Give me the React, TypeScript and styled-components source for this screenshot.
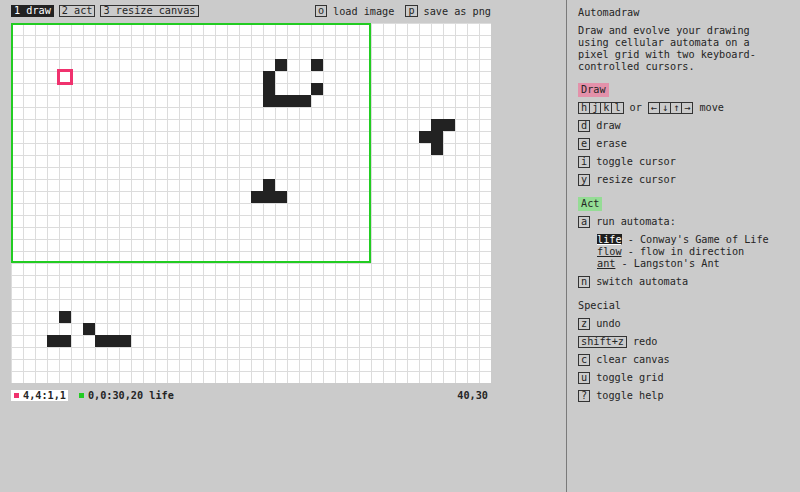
import React from 'react';
import styled, { createGlobalStyle } from 'styled-components';

const COLS = 40;
const ROWS = 30;
const CELL = 12;

// live pixels on the canvas, [col, row]
const pixels: [number, number][] = [
  [22, 3], [25, 3], [21, 4], [21, 5], [25, 5], [21, 6], [22, 6], [23, 6], [24, 6],
  [35, 8], [36, 8], [34, 9], [35, 9], [35, 10],
  [21, 13], [20, 14], [21, 14], [22, 14],
  [4, 24], [6, 25], [3, 26], [4, 26], [7, 26], [8, 26], [9, 26],
];

const PINK = '#f0326e';
const GREEN = '#22cc22';

const GlobalStyle = createGlobalStyle`
  html, body {
    margin: 0;
    padding: 0;
    background: #cbcbcb;
  }
  body {
    font-family: "DejaVu Sans Mono", "Liberation Mono", monospace;
    font-size: 10.2px;
    color: #252525;
  }
`;

const Layout = styled.div`
  display: flex;
  height: 100vh;
  overflow: hidden;
`;

const Main = styled.div`
  width: 566px;
  flex-shrink: 0;
  padding: 5px 11px 0 11px;
  box-sizing: border-box;
  display: flex;
  flex-direction: column;
  gap: 6px;
`;

const Toolbar = styled.div`
  width: 480px;
  display: flex;
  justify-content: space-between;
  align-items: center;
`;

const Group = styled.div`
  display: flex;
  align-items: center;
  gap: 5px;
`;

const Tab = styled.span<{ $active?: boolean }>`
  display: inline-block;
  line-height: 10px;
  padding: 0 2px;
  border: 1px solid ${(p) => (p.$active ? '#222' : '#333')};
  background: ${(p) => (p.$active ? '#222' : 'transparent')};
  color: ${(p) => (p.$active ? '#fff' : '#252525')};
  white-space: pre;
`;

const Action = styled.span`
  display: flex;
  align-items: center;
  gap: 6px;
  margin-left: 6px;
`;

const Key = styled.span`
  display: inline-block;
  line-height: 10px;
  padding: 0 2px;
  border: 1px solid #333;
  white-space: pre;
`;

const KeyGroup = styled.span`
  display: inline-flex;
  border: 1px solid #333;
  & > span {
    line-height: 10px;
    padding: 0 2px;
    border-left: 1px solid #333;
  }
  & > span:first-child {
    border-left: none;
  }
`;

const Canvas = styled.svg`
  display: block;
`;

const Status = styled.div`
  width: 480px;
  display: flex;
  align-items: center;
  margin-top: 1px;
  font-weight: bold;
  line-height: 11px;
`;

const Cursor = styled.span<{ $active?: boolean }>`
  display: flex;
  align-items: center;
  gap: 4px;
  padding: 0 2px 0 3px;
  margin-right: 8px;
  background: ${(p) => (p.$active ? '#fff' : 'transparent')};
`;

const Swatch = styled.span<{ $color: string }>`
  width: 5px;
  height: 5px;
  background: ${(p) => p.$color};
`;

const Size = styled.span`
  margin-left: auto;
  padding-right: 3px;
`;

const Panel = styled.div`
  flex: 1;
  border-left: 1px solid #7a7a7a;
  padding: 7px 11px 0 11px;
  line-height: 12px;
`;

const Title = styled.div`
  margin-bottom: 6px;
`;

const Desc = styled.div`
  max-width: 32ch;
  margin-bottom: -1px;
`;

const Section = styled.div`
  margin-top: 11px;
`;

const Label = styled.span<{ $tone?: 'draw' | 'act' }>`
  display: inline-block;
  line-height: 10px;
  padding: 2px ${(p) => (p.$tone ? '3px' : '0')};
  background: ${(p) =>
    p.$tone === 'draw' ? '#e391aa' : p.$tone === 'act' ? '#95dc95' : 'transparent'};
`;

const List = styled.div`
  display: flex;
  flex-direction: column;
  gap: 6px;
  margin-top: 5px;
`;

const Row = styled.div`
  display: flex;
  align-items: center;
  gap: 6px;
  height: 12px;
  white-space: pre;
`;

const SubList = styled.div`
  margin-left: 19px;
  white-space: pre;
`;

const Mode = styled.span<{ $active?: boolean }>`
  text-decoration: underline;
  background: ${(p) => (p.$active ? '#1e1e1e' : 'transparent')};
  color: ${(p) => (p.$active ? '#fff' : 'inherit')};
`;

function PixelCanvas() {
  const lines: React.ReactNode[] = [];
  for (let c = 0; c < COLS; c++) {
    lines.push(<line key={'v' + c} x1={c * CELL + 0.5} y1={0} x2={c * CELL + 0.5} y2={ROWS * CELL} />);
  }
  for (let r = 0; r < ROWS; r++) {
    lines.push(<line key={'h' + r} x1={0} y1={r * CELL + 0.5} x2={COLS * CELL} y2={r * CELL + 0.5} />);
  }
  return (
    <Canvas width={COLS * CELL} height={ROWS * CELL}>
      <rect width={COLS * CELL} height={ROWS * CELL} fill="#fff" />
      <g stroke="#dcdcdc" strokeWidth={1}>{lines}</g>
      <g fill="#222">
        {pixels.map(([c, r]) => (
          <rect key={c + '-' + r} x={c * CELL} y={r * CELL} width={CELL} height={CELL} />
        ))}
      </g>
      <rect x={1} y={1} width={30 * CELL - 2} height={20 * CELL - 2} fill="none" stroke={GREEN} strokeWidth={2} />
      <rect x={4 * CELL - 0.5} y={4 * CELL - 0.5} width={CELL + 1} height={CELL + 1} fill="none" stroke={PINK} strokeWidth={3} />
    </Canvas>
  );
}

const App: React.FC = () => {
  return (
    <>
      <GlobalStyle />
      <Layout>
        <Main>
          <Toolbar>
            <Group>
              <Tab $active>1 draw</Tab>
              <Tab>2 act</Tab>
              <Tab>3 resize canvas</Tab>
            </Group>
            <Group>
              <Action><Key>o</Key>load image</Action>
              <Action><Key>p</Key>save as png</Action>
            </Group>
          </Toolbar>
          <PixelCanvas />
          <Status>
            <Cursor $active><Swatch $color={PINK} />4,4:1,1</Cursor>
            <Cursor><Swatch $color={GREEN} />0,0:30,20 life</Cursor>
            <Size>40,30</Size>
          </Status>
        </Main>
        <Panel>
          <Title>Automadraw</Title>
          <Desc>
            Draw and evolve your drawing using cellular automata on a pixel grid with two keyboard-controlled cursors.
          </Desc>
          <Section>
            <Label $tone="draw">Draw</Label>
            <List>
              <Row>
                <KeyGroup><span>h</span><span>j</span><span>k</span><span>l</span></KeyGroup>
                or
                <KeyGroup><span>←</span><span>↓</span><span>↑</span><span>→</span></KeyGroup>
                move
              </Row>
              <Row><Key>d</Key>draw</Row>
              <Row><Key>e</Key>erase</Row>
              <Row><Key>i</Key>toggle cursor</Row>
              <Row><Key>y</Key>resize cursor</Row>
            </List>
          </Section>
          <Section>
            <Label $tone="act">Act</Label>
            <List>
              <Row><Key>a</Key>run automata:</Row>
              <SubList>
                <div><Mode $active>life</Mode> - Conway's Game of Life</div>
                <div><Mode>flow</Mode> - flow in direction</div>
                <div><Mode>ant</Mode> - Langston's Ant</div>
              </SubList>
              <Row><Key>n</Key>switch automata</Row>
            </List>
          </Section>
          <Section>
            <Label>Special</Label>
            <List>
              <Row><Key>z</Key>undo</Row>
              <Row><Key>shift+z</Key>redo</Row>
              <Row><Key>c</Key>clear canvas</Row>
              <Row><Key>u</Key>toggle grid</Row>
              <Row><Key>?</Key>toggle help</Row>
            </List>
          </Section>
        </Panel>
      </Layout>
    </>
  );
};

export default App;
